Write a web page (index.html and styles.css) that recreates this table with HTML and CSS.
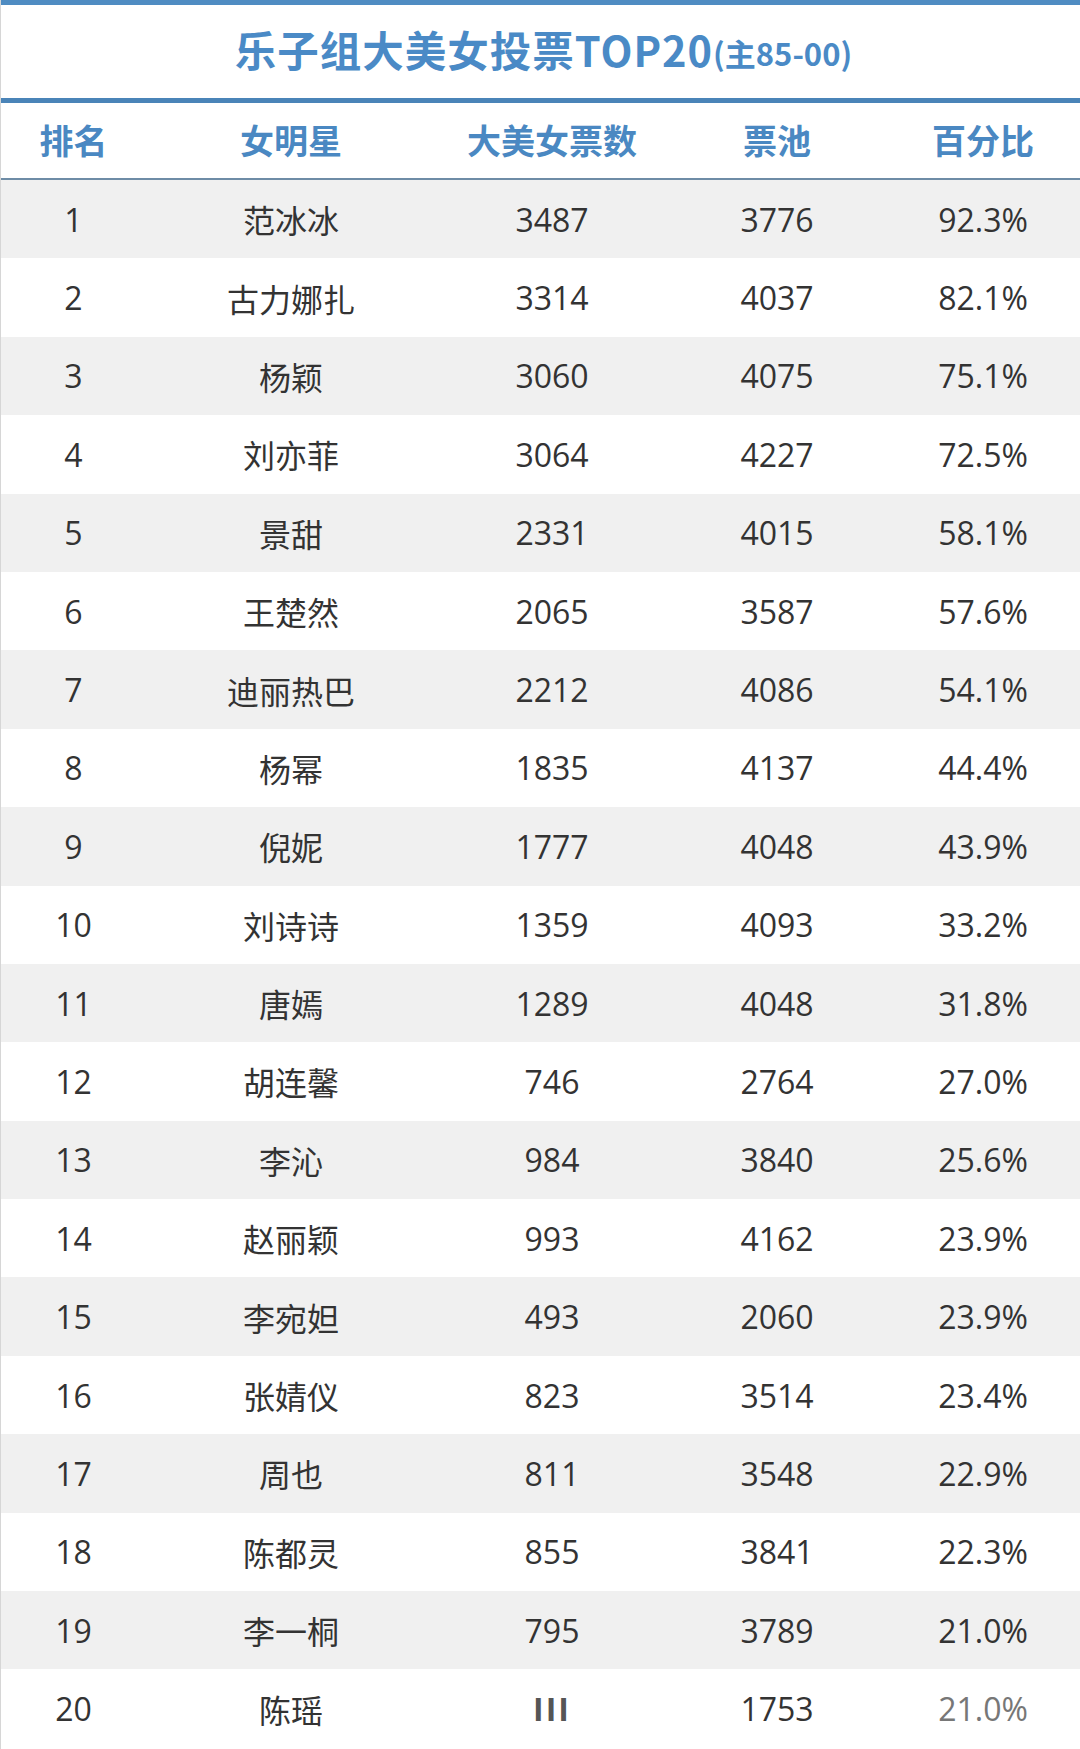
FILE: index.html
```html
<!DOCTYPE html>
<html lang="zh-CN">
<head>
<meta charset="utf-8">
<title>乐子组大美女投票TOP20</title>
<link rel="stylesheet" href="styles.css">
</head>
<body>
<div class="board">
  <div class="title"><span class="title-main">乐子组大美女投票TOP20</span><span class="title-sub">(主85-00)</span></div>
  <div class="row head">
    <div>排名</div><div>女明星</div><div>大美女票数</div><div>票池</div><div>百分比</div>
  </div>
  <div class="row odd"><div>1</div><div>范冰冰</div><div>3487</div><div>3776</div><div>92.3%</div></div>
  <div class="row"><div>2</div><div>古力娜扎</div><div>3314</div><div>4037</div><div>82.1%</div></div>
  <div class="row odd"><div>3</div><div>杨颖</div><div>3060</div><div>4075</div><div>75.1%</div></div>
  <div class="row"><div>4</div><div>刘亦菲</div><div>3064</div><div>4227</div><div>72.5%</div></div>
  <div class="row odd"><div>5</div><div>景甜</div><div>2331</div><div>4015</div><div>58.1%</div></div>
  <div class="row"><div>6</div><div>王楚然</div><div>2065</div><div>3587</div><div>57.6%</div></div>
  <div class="row odd"><div>7</div><div>迪丽热巴</div><div>2212</div><div>4086</div><div>54.1%</div></div>
  <div class="row"><div>8</div><div>杨幂</div><div>1835</div><div>4137</div><div>44.4%</div></div>
  <div class="row odd"><div>9</div><div>倪妮</div><div>1777</div><div>4048</div><div>43.9%</div></div>
  <div class="row"><div>10</div><div>刘诗诗</div><div>1359</div><div>4093</div><div>33.2%</div></div>
  <div class="row odd"><div>11</div><div>唐嫣</div><div>1289</div><div>4048</div><div>31.8%</div></div>
  <div class="row"><div>12</div><div>胡连馨</div><div>746</div><div>2764</div><div>27.0%</div></div>
  <div class="row odd"><div>13</div><div>李沁</div><div>984</div><div>3840</div><div>25.6%</div></div>
  <div class="row"><div>14</div><div>赵丽颖</div><div>993</div><div>4162</div><div>23.9%</div></div>
  <div class="row odd"><div>15</div><div>李宛妲</div><div>493</div><div>2060</div><div>23.9%</div></div>
  <div class="row"><div>16</div><div>张婧仪</div><div>823</div><div>3514</div><div>23.4%</div></div>
  <div class="row odd"><div>17</div><div>周也</div><div>811</div><div>3548</div><div>22.9%</div></div>
  <div class="row"><div>18</div><div>陈都灵</div><div>855</div><div>3841</div><div>22.3%</div></div>
  <div class="row odd"><div>19</div><div>李一桐</div><div>795</div><div>3789</div><div>21.0%</div></div>
  <div class="row"><div>20</div><div>陈瑶</div><div class="blur">III</div><div>1753</div><div class="faded">21.0%</div></div>
</div>
</body>
</html>
```
FILE: styles.css
```css
html, body {
  margin: 0;
  padding: 0;
  background: #ffffff;
}
body {
  font-family: "Noto Sans CJK SC", "Noto Sans", sans-serif;
  color: #333333;
}
.board {
  width: 1080px;
  height: 1749px;
  overflow: hidden;
  border-left: 1px solid #d6d6d6;
  box-sizing: border-box;
}
.title {
  box-sizing: border-box;
  height: 103px;
  border-top: 5px solid #4f8cc2;
  border-bottom: 5px solid #4a84b8;
  display: flex;
  align-items: center;
  justify-content: center;
  color: #4a8ac6;
  font-weight: 700;
  padding-bottom: 6px;
  padding-left: 6px;
}
.title-main {
  font-size: 41.5px;
  letter-spacing: 1px;
}
.title-sub {
  font-size: 31px;
  margin-top: 8px;
}
.row {
  display: grid;
  grid-template-columns: 145px 290px 232px 218px 194px;
  height: 78.4px;
  align-items: center;
  font-family: "Open Sans", "Noto Sans CJK SC", sans-serif;
  font-size: 32px;
  background: #ffffff;
}
.row > div {
  text-align: center;
}
.row.odd {
  background: #f0f0f0;
}
.row.head {
  height: 77px;
  box-sizing: border-box;
  border-bottom: 2px solid #6e8ca6;
  color: #4a88c2;
  font-family: "Noto Sans CJK SC", sans-serif;
  font-weight: 700;
  font-size: 34px;
  background: #ffffff;
  padding-bottom: 2px;
}
.blur {
  font-weight: 700;
  color: #555555;
  letter-spacing: 2px;
}
.faded {
  color: #777777;
}
```
